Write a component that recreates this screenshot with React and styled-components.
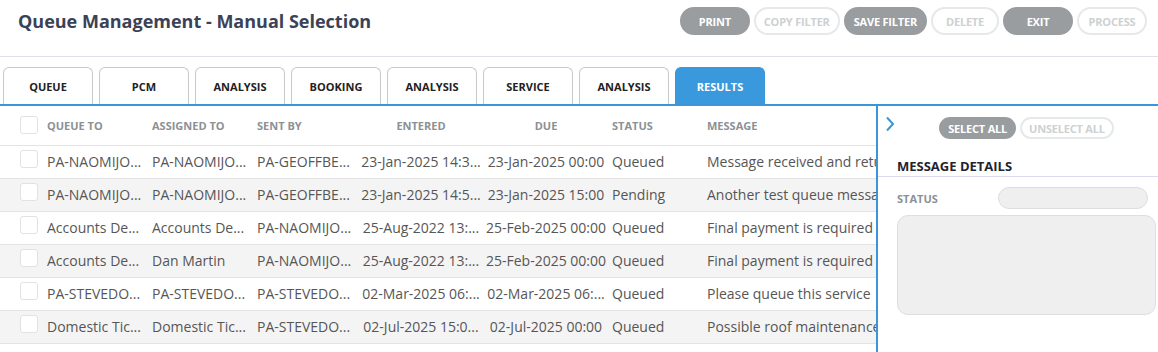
import React from "react";
import styled, { createGlobalStyle } from "styled-components";

const Global = createGlobalStyle`
  html, body { margin: 0; padding: 0; background: #fff; }
  body { font-family: "Open Sans", "Noto Sans", sans-serif; }
  * { box-sizing: border-box; }
`;

const Page = styled.div`
  width: 1158px;
  height: 352px;
  overflow: hidden;
  display: flex;
  flex-direction: column;
`;

const Header = styled.header`
  height: 57px;
  flex: none;
  display: flex;
  align-items: flex-start;
  justify-content: space-between;
  border-bottom: 1px solid #e2def0;
  padding: 0 11px 0 18px;
`;

const Title = styled.h1`
  margin: 8px 0 0;
  font-size: 18px;
  font-weight: 700;
  color: #3b4255;
  line-height: 26px;
`;

const Actions = styled.div`
  display: flex;
  gap: 4px;
  margin-top: 7px;
`;

const Pill = styled.button`
  height: 28px;
  min-width: ${(p) => p.$w || 70}px;
  padding: 0 8px;
  border-radius: 14px;
  font-family: inherit;
  font-size: 11px;
  font-weight: 700;
  letter-spacing: -0.2px;
  cursor: pointer;
  border: 2px solid ${(p) => (p.$on ? "#9a9d9f" : "#e6e9e9")};
  background: ${(p) => (p.$on ? "#9a9d9f" : "#fff")};
  color: ${(p) => (p.$on ? "#fff" : "#cdd1d1")};
`;

const Tabs = styled.nav`
  flex: none;
  display: flex;
  gap: 6px;
  padding-left: 3px;
  margin-top: 10px;
  border-bottom: 2px solid #3a95d9;
`;

const Tab = styled.div`
  width: 90px;
  height: 37px;
  display: flex;
  align-items: center;
  justify-content: center;
  border: 1px solid ${(p) => (p.$active ? "#3a99dd" : "#c6cacd")};
  border-bottom: none;
  border-radius: 6px 6px 0 0;
  background: ${(p) => (p.$active ? "#3a99dd" : "#fff")};
  color: ${(p) => (p.$active ? "#fff" : "#222")};
  font-size: 11px;
  font-weight: 700;
`;

const Body = styled.div`
  flex: 1;
  display: flex;
  min-height: 0;
`;

const TableWrap = styled.div`
  width: 878px;
  flex: none;
  border-right: 2px solid #3a95d9;
  overflow: hidden;
`;

const Table = styled.table`
  width: 876px;
  table-layout: fixed;
  border-collapse: collapse;
`;

const HeadCell = styled.th`
  height: 39px;
  padding: 0 0 0 ${(p) => p.$pad ?? 5}px;
  text-align: ${(p) => p.$align || "left"};
  font-size: 11px;
  font-weight: 700;
  color: #8b9195;
  border-bottom: 1px solid #e3e3e3;
  vertical-align: middle;
  white-space: nowrap;
`;

const Row = styled.tr`
  background: ${(p) => (p.$alt ? "#f4f4f4" : "#fff")};
`;

const Cell = styled.td`
  height: 33px;
  padding: 0 0 0 ${(p) => p.$pad ?? 5}px;
  text-align: ${(p) => p.$align || "left"};
  font-size: 14px;
  color: #565656;
  border-bottom: 1px solid #e3e3e3;
  white-space: nowrap;
  overflow: hidden;
  text-overflow: clip;
  vertical-align: middle;
`;

const BoxCell = styled.td`
  padding: 4px 0 0 20px;
  vertical-align: top;
  border-bottom: 1px solid #e3e3e3;
`;

const HeadBoxCell = styled.th`
  padding: 0 0 0 20px;
  border-bottom: 1px solid #e3e3e3;
  vertical-align: middle;
`;

const Check = styled.span`
  display: block;
  width: 18px;
  height: 18px;
  border: 1px solid #e2e2e2;
  border-radius: 3px;
  background: #fff;
`;

const Panel = styled.aside`
  flex: 1;
  display: flex;
  flex-direction: column;
`;

const PanelTop = styled.div`
  display: flex;
  align-items: center;
  height: 43px;
  padding: 0 0 0 7px;
`;

const Chevron = styled.svg`
  width: 10px;
  height: 16px;
  margin-top: -8px;
  flex: none;
`;

const PanelActions = styled.div`
  flex: 1;
  display: flex;
  justify-content: center;
  gap: 4px;
  margin-top: 1px;
`;

const SmallPill = styled(Pill)`
  height: 22px;
  min-width: 0;
  padding: 0 7px;
  border-radius: 11px;
`;

const SectionTitle = styled.h2`
  margin: 8px 0 0;
  padding: 0 0 1px 19px;
  font-size: 13px;
  font-weight: 700;
  color: #1f2430;
  border-bottom: 1px solid #dcd8ee;
  line-height: 18px;
`;

const FieldRow = styled.div`
  display: flex;
  align-items: center;
  justify-content: space-between;
  padding: 10px 10px 0 19px;
`;

const Label = styled.span`
  font-size: 11px;
  font-weight: 700;
  color: #8b9195;
`;

const Input = styled.div`
  width: 150px;
  height: 22px;
  border-radius: 11px;
  background: #efefef;
  border: 1px solid #dedede;
`;

const Area = styled.div`
  margin: 6px 2px 0 19px;
  height: 100px;
  border-radius: 11px;
  background: #efefef;
  border: 1px solid #dedede;
`;

const tabs = ["QUEUE", "PCM", "ANALYSIS", "BOOKING", "ANALYSIS", "SERVICE", "ANALYSIS", "RESULTS"];

const rows = [
  ["PA-NAOMIJO...", "PA-NAOMIJO...", "PA-GEOFFBE...", "23-Jan-2025 14:3...", "23-Jan-2025 00:00", "Queued", "Message received and returned to sender"],
  ["PA-NAOMIJO...", "PA-NAOMIJO...", "PA-GEOFFBE...", "23-Jan-2025 14:5...", "23-Jan-2025 15:00", "Pending", "Another test queue message"],
  ["Accounts De...", "Accounts De...", "PA-NAOMIJO...", "25-Aug-2022 13:...", "25-Feb-2025 00:00", "Queued", "Final payment is required"],
  ["Accounts De...", "Dan Martin", "PA-NAOMIJO...", "25-Aug-2022 13:...", "25-Feb-2025 00:00", "Queued", "Final payment is required"],
  ["PA-STEVEDO...", "PA-STEVEDO...", "PA-STEVEDO...", "02-Mar-2025 06:...", "02-Mar-2025 06:...", "Queued", "Please queue this service"],
  ["Domestic Tic...", "Domestic Tic...", "PA-STEVEDO...", "02-Jul-2025 15:0...", "02-Jul-2025 00:00", "Queued", "Possible roof maintenance required"],
];

const widths = [42, 105, 105, 105, 125, 125, 95, 174];

export default function App() {
  return (
    <Page>
      <Global />
      <Header>
        <Title>Queue Management - Manual Selection</Title>
        <Actions>
          <Pill $on>PRINT</Pill>
          <Pill $w={83}>COPY FILTER</Pill>
          <Pill $on $w={82}>SAVE FILTER</Pill>
          <Pill $w={68}>DELETE</Pill>
          <Pill $on>EXIT</Pill>
          <Pill>PROCESS</Pill>
        </Actions>
      </Header>
      <Tabs>
        {tabs.map((t, i) => (
          <Tab key={i} $active={t === "RESULTS"}>{t}</Tab>
        ))}
      </Tabs>
      <Body>
        <TableWrap>
          <Table>
            <colgroup>
              {widths.map((w, i) => (
                <col key={i} style={{ width: w }} />
              ))}
            </colgroup>
            <thead>
              <tr>
                <HeadBoxCell><Check /></HeadBoxCell>
                <HeadCell>QUEUE TO</HeadCell>
                <HeadCell>ASSIGNED TO</HeadCell>
                <HeadCell>SENT BY</HeadCell>
                <HeadCell $align="center" $pad={3}>ENTERED</HeadCell>
                <HeadCell $align="center" $pad={3}>DUE</HeadCell>
                <HeadCell>STATUS</HeadCell>
                <HeadCell>MESSAGE</HeadCell>
              </tr>
            </thead>
            <tbody>
              {rows.map((r, i) => (
                <Row key={i} $alt={i % 2 === 1}>
                  <BoxCell><Check /></BoxCell>
                  <Cell>{r[0]}</Cell>
                  <Cell>{r[1]}</Cell>
                  <Cell>{r[2]}</Cell>
                  <Cell $align="center" $pad={3}>{r[3]}</Cell>
                  <Cell $align="center" $pad={3}>{r[4]}</Cell>
                  <Cell>{r[5]}</Cell>
                  <Cell>{r[6]}</Cell>
                </Row>
              ))}
            </tbody>
          </Table>
        </TableWrap>
        <Panel>
          <PanelTop>
            <Chevron viewBox="0 0 10 16">
              <path d="M2 1.5 L8 8 L2 14.5" fill="none" stroke="#3a95d9" strokeWidth="2" />
            </Chevron>
            <PanelActions>
              <SmallPill $on>SELECT ALL</SmallPill>
              <SmallPill>UNSELECT ALL</SmallPill>
            </PanelActions>
          </PanelTop>
          <SectionTitle>MESSAGE DETAILS</SectionTitle>
          <FieldRow>
            <Label>STATUS</Label>
            <Input />
          </FieldRow>
          <Area />
        </Panel>
      </Body>
    </Page>
  );
}
